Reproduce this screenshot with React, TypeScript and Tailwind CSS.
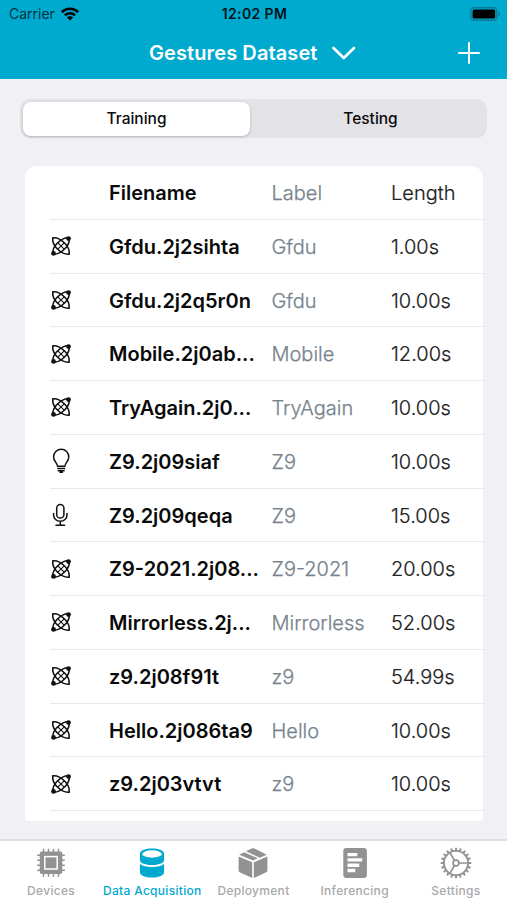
import React from "react";

type Kind = "motion" | "light" | "audio";
type Sample = { kind: Kind; file: string; label: string; length: string };

const samples: Sample[] = [
  { kind: "motion", file: "Gfdu.2j2sihta", label: "Gfdu", length: "1.00s" },
  { kind: "motion", file: "Gfdu.2j2q5r0n", label: "Gfdu", length: "10.00s" },
  { kind: "motion", file: "Mobile.2j0ab...", label: "Mobile", length: "12.00s" },
  { kind: "motion", file: "TryAgain.2j0...", label: "TryAgain", length: "10.00s" },
  { kind: "light", file: "Z9.2j09siaf", label: "Z9", length: "10.00s" },
  { kind: "audio", file: "Z9.2j09qeqa", label: "Z9", length: "15.00s" },
  { kind: "motion", file: "Z9-2021.2j08...", label: "Z9-2021", length: "20.00s" },
  { kind: "motion", file: "Mirrorless.2j...", label: "Mirrorless", length: "52.00s" },
  { kind: "motion", file: "z9.2j08f91t", label: "z9", length: "54.99s" },
  { kind: "motion", file: "Hello.2j086ta9", label: "Hello", length: "10.00s" },
  { kind: "motion", file: "z9.2j03vtvt", label: "z9", length: "10.00s" },
];

function KindIcon({ kind }: { kind: Kind }) {
  if (kind === "light") {
    return (
      <svg width="22" height="26" viewBox="0 0 22 26" fill="none" stroke="#111" strokeWidth="1.5" strokeLinecap="round" strokeLinejoin="round">
        <path d="M7.500 18.200C7.200 14.600 3.600 13.200 3.600 8.900a7.600 7.600 0 0 1 15.200 0c0 4.300-3.600 5.700-3.900 9.300Z" />
        <path d="M7.800 20.600h6.800M8.300 22.700h5.800M10 24.300h2.400" strokeWidth="1.500" />
      </svg>
    );
  }
  if (kind === "audio") {
    return (
      <svg width="22" height="26" viewBox="0 0 22 26" fill="none" stroke="#111" strokeWidth="1.5" strokeLinecap="round">
        <rect x="6.700" y="2.500" width="7.200" height="13.500" rx="3.600" />
        <path d="M3.600 11.500v1.700a6.700 6 0 0 0 13.400 0v-1.700M10.300 19.300v3.900M6 23.300h8.600" />
      </svg>
    );
  }
  return (
    <svg width="22" height="26" viewBox="0 0 22 26" fill="none" stroke="#111" strokeWidth="1.6" strokeLinejoin="round">
      <path d="M2.800 4.800C7 4.300 11.800 7.200 14.800 10.200S19.700 17 19.200 21.200C15 21.700 10.200 18.800 7.200 15.800S2.300 9 2.800 4.800Z" />
      <path d="M19.200 4.800C15 4.300 10.200 7.200 7.200 10.200S2.300 17 2.800 21.200C7 21.700 11.800 18.800 14.800 15.800S19.700 9 19.200 4.800Z" />
      <path d="m7.800 9.800 6.400 6.400M14.200 9.800l-6.400 6.400" strokeWidth="1.1" />
      <circle cx="18.500" cy="5.600" r="2.400" fill="#111" stroke="none" />
      <circle cx="3.500" cy="20.400" r="2.400" fill="#111" stroke="none" />
    </svg>
  );
}

function ChipIcon() {
  const pins = [8, 13, 18, 23];
  return (
    <svg width="32" height="32" viewBox="0 0 32 32" fill="none">
      <g stroke="#929292" strokeWidth="1.500">
        {pins.map((p) => (
          <path key={p} d={`M${p + 0.5} 1.800v28M2.200 ${p + 0.3}h27.600`} />
        ))}
      </g>
      <rect x="4.700" y="4.500" width="22.600" height="22.600" rx="2" fill="#929292" />
      <rect x="9.800" y="9.600" width="12.400" height="12.400" stroke="#fff" strokeWidth="1.500" />
    </svg>
  );
}

function DatabaseIcon() {
  return (
    <svg width="32" height="32" viewBox="0 0 32 32" fill="#00a9ce">
      <path d="M3.900 7C3.900 -.2 28.100 -.2 28.100 7v6.300c0 6.300-24.200 6.300-24.200 0Z" />
      <path d="M3.900 16.800c4.500 4.300 19.700 4.300 24.200 0V25.300c0 7-24.200 7-24.200 0Z" />
      <ellipse cx="16" cy="7" rx="9.800" ry="3.700" fill="#fff" />
    </svg>
  );
}

function BoxIcon() {
  return (
    <svg width="32" height="32" viewBox="0 0 32 32" fill="#929292">
      <path d="M1.600 9.400 15.200 15.300V31L2.700 25.300Q1.600 24.800 1.600 23.600Z" />
      <path d="M30.400 9.400 16.800 15.300V31L29.300 25.300Q30.400 24.800 30.400 23.600Z" />
      <path d="m2.200 7.700 4.900-2.500 13.700 6-4.800 2.400Z" />
      <path d="m9 4.200 5.500-2.700q1.500-.7 3 0L29.800 7.700 22.800 10.700Z" />
    </svg>
  );
}

function ReportIcon() {
  return (
    <svg width="32" height="32" viewBox="0 0 32 32">
      <rect x="4.300" y="1" width="23.600" height="30" rx="3" fill="#929292" />
      <path d="M8.500 5.900h9.800v3.400H8.500ZM8.500 11.200h14.800v3.400H8.500ZM8.500 16.500h11.800v3.400H8.500ZM8.500 21.800h7.800v3.400H8.500Z" fill="#fff" />
    </svg>
  );
}

function GearIcon() {
  const teeth = Array.from({ length: 20 }, (_, i) => i * 18);
  return (
    <svg width="32" height="32" viewBox="0 0 32 32" fill="none" stroke="#929292" strokeWidth="1.700">
      <circle cx="16" cy="16" r="12.100" strokeWidth="1.900" />
      <circle cx="16" cy="16" r="2.900" />
      <path d="M18.900 16H28M14.500 13.500 9.900 5.600M14.500 18.500 9.900 26.400" />
      {teeth.map((a) => (
        <path key={a} d="M16 .7v3.300" strokeWidth="2" transform={`rotate(${a} 16 16)`} />
      ))}
    </svg>
  );
}

const tabs = [
  { name: "Devices", icon: <ChipIcon /> },
  { name: "Data Acquisition", icon: <DatabaseIcon />, active: true },
  { name: "Deployment", icon: <BoxIcon /> },
  { name: "Inferencing", icon: <ReportIcon /> },
  { name: "Settings", icon: <GearIcon /> },
];

const columns =
  "grid h-[53.75px] grid-cols-[59px_162.500px_119.500px_1fr] items-center whitespace-nowrap border-b border-[#e9e9eb] text-[20px] leading-6";
const labelText = "pt-[1.500px] font-light text-[#76838e] [-webkit-text-stroke:0.25px_#76838e]";
const lengthText = "pt-[1.500px] font-light text-[#222222] [-webkit-text-stroke:0.2px_#222222]";

export default function App() {
  return (
    <div className="flex h-[900px] w-[507px] flex-col overflow-hidden bg-[#f1f0f5] font-['Inter','Liberation_Sans',sans-serif] text-[#0a0a0a]">
      <header className="h-[79px] shrink-0 bg-[#00a9ce]">
        <div className="grid h-[27px] grid-cols-3 items-center pl-[9px] pr-[6px]">
          <div className="flex items-center gap-[6px] text-[14px] text-[#07323e]">
            <span>Carrier</span>
            <svg width="18" height="14" viewBox="0 0 18 14" fill="none" stroke="#000" strokeWidth="2.500">
              <path d="M.9 5.200a11.500 11.500 0 0 1 16.200 0M3.900 8.300a7.200 7.200 0 0 1 10.200 0" />
              <path d="M9 13.600 5.900 10.500a4.400 4.400 0 0 1 6.200 0Z" fill="#000" stroke="none" />
            </svg>
          </div>
          <span className="pr-px text-center text-[14px] font-semibold tracking-[0.4px] text-[#00151b]">12:02 PM</span>
          <svg className="justify-self-end" width="31" height="14" viewBox="0 0 31 14">
            <rect x=".8" y=".8" width="26" height="12.400" rx="3.500" fill="none" stroke="#087b97" strokeWidth="1.400" />
            <rect x="2.600" y="2.400" width="22.600" height="9.200" rx="1.500" />
            <path d="M28.300 4.800c2.300.9 2.300 3.500 0 4.400Z" fill="#087b97" />
          </svg>
        </div>
        <div className="flex h-[52px] items-center pl-[149px] pr-[27px] text-white">
          <h1 className="text-[20px] font-semibold leading-6 tracking-[0.1px]">Gestures Dataset</h1>
          <svg className="ml-[13px]" width="26" height="18" viewBox="0 0 26 18" fill="none" stroke="#fff" strokeWidth="2.700" strokeLinecap="round" strokeLinejoin="round">
            <path d="m2.500 4 10.300 10L23 4" />
          </svg>
          <svg className="ml-auto" width="22" height="22" viewBox="0 0 22 22" stroke="#fff" strokeWidth="2" strokeLinecap="round">
            <path d="M1 11h20M11 1v20" />
          </svg>
        </div>
      </header>

      <div className="mx-5 mt-5 grid h-[39px] shrink-0 grid-cols-[227px_1fr] rounded-[10px] bg-[#e3e2e7] p-[2.500px] text-[15.500px] font-medium">
        <div className="flex items-center justify-center rounded-[8px] bg-white pl-px shadow-[0_1px_3px_0_rgba(0,0,0,0.2)]">Training</div>
        <div className="flex items-center justify-center pl-[7px]">Testing</div>
      </div>

      <main className="ml-[25px] mt-7 h-[655px] w-[458px] shrink-0 rounded-t-[12px] rounded-b-[3px] bg-white pl-[25px]">
        <div className={columns}>
          <span />
          <span className="pt-[1.500px] font-semibold">Filename</span>
          <span className={labelText}>Label</span>
          <span className={lengthText}>Length</span>
        </div>
        {samples.map((s) => (
          <div key={s.file} className={columns}>
            <KindIcon kind={s.kind} />
            <span className="pt-[1.500px] font-semibold">{s.file}</span>
            <span className={labelText}>{s.label}</span>
            <span className={lengthText}>{s.length}</span>
          </div>
        ))}
      </main>

      <nav className="mt-auto grid h-[61px] shrink-0 grid-cols-5 border-t-2 border-[#dfdfe2] bg-white pr-px pt-[6px]">
        {tabs.map((t) => (
          <div key={t.name} className={"flex flex-col items-center whitespace-nowrap pl-px text-[12px] font-medium leading-4 tracking-[0.3px] " + (t.active ? "text-[#00a9ce]" : "text-[#a8a8a8]")}>
            {t.icon}
            <span className="mt-[4px]">{t.name}</span>
          </div>
        ))}
      </nav>
    </div>
  );
}
